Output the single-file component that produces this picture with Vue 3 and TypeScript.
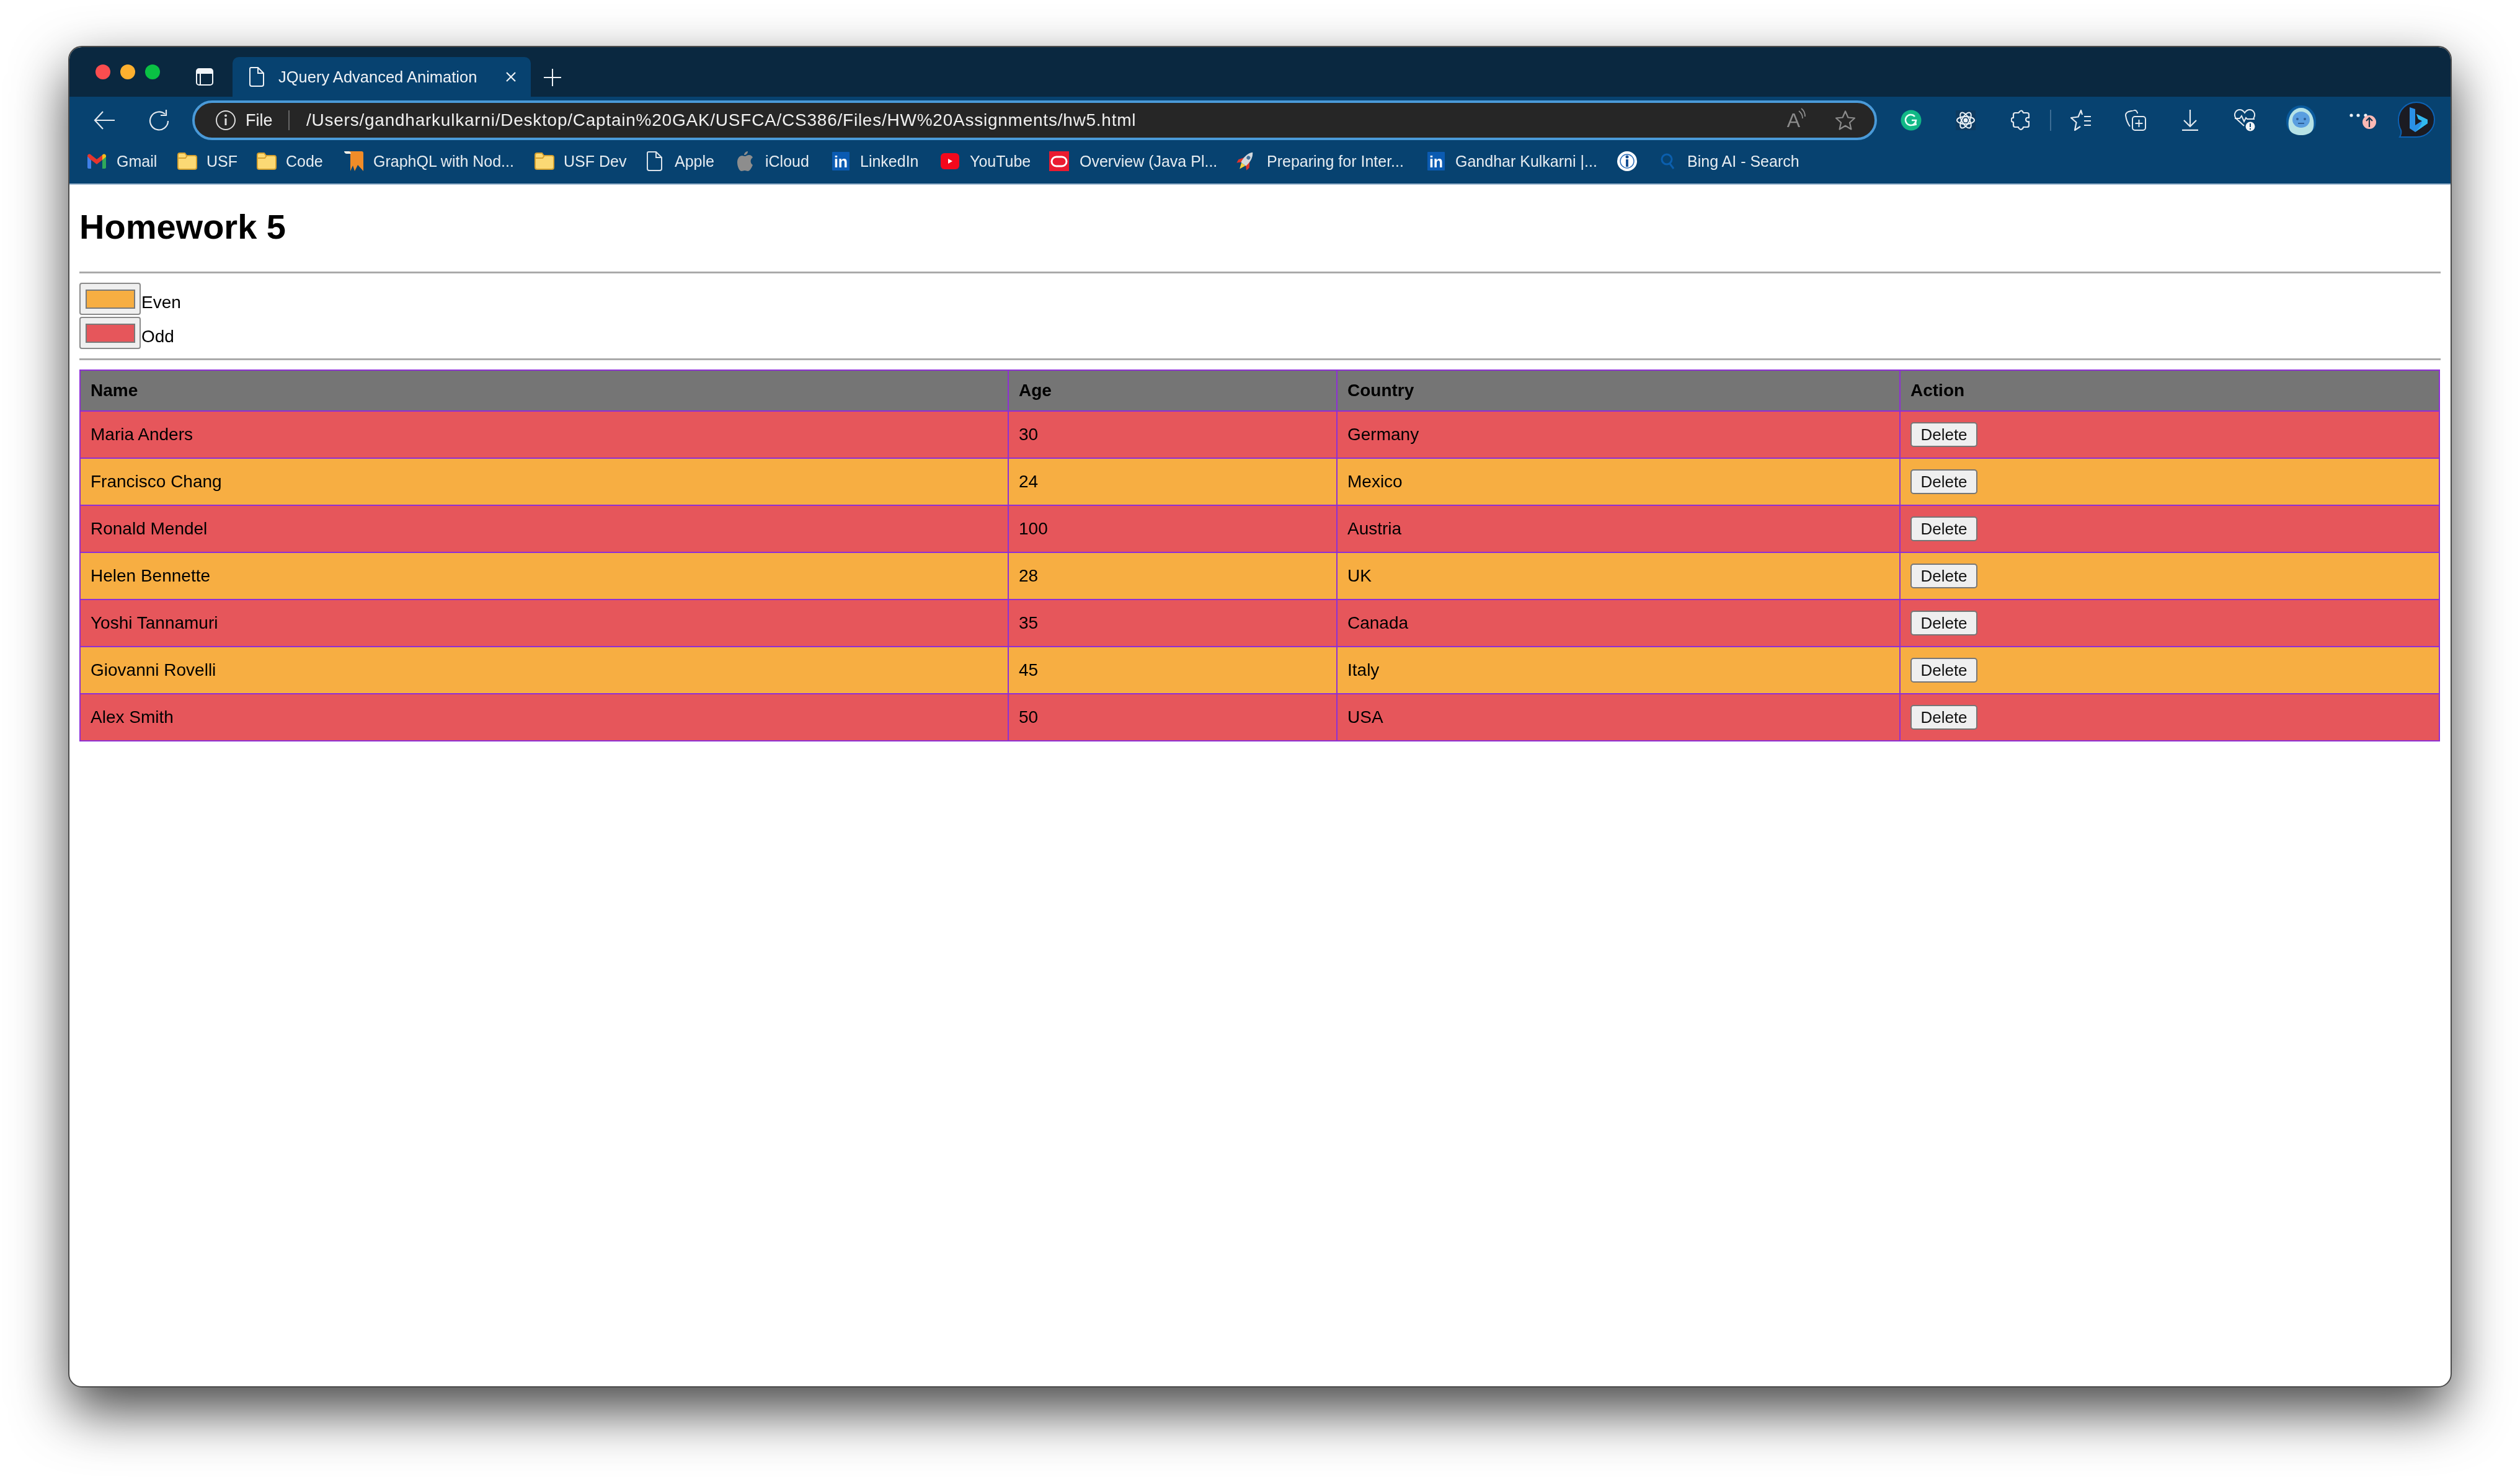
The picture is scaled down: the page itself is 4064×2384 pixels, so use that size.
<script setup lang="ts">
interface Person { name: string; age: number; country: string }
interface Mark { kind: string; label: string; width: number }

const people: Person[] = [
  { name: 'Maria Anders', age: 30, country: 'Germany' },
  { name: 'Francisco Chang', age: 24, country: 'Mexico' },
  { name: 'Ronald Mendel', age: 100, country: 'Austria' },
  { name: 'Helen Bennette', age: 28, country: 'UK' },
  { name: 'Yoshi Tannamuri', age: 35, country: 'Canada' },
  { name: 'Giovanni Rovelli', age: 45, country: 'Italy' },
  { name: 'Alex Smith', age: 50, country: 'USA' },
]

const marks: Mark[] = [
  { kind: 'gmail', label: 'Gmail', width: 145 },
  { kind: 'folder', label: 'USF', width: 128 },
  { kind: 'folder', label: 'Code', width: 141 },
  { kind: 'ribbon', label: 'GraphQL with Nod...', width: 307 },
  { kind: 'folder', label: 'USF Dev', width: 181 },
  { kind: 'doc', label: 'Apple', width: 146 },
  { kind: 'apple', label: 'iCloud', width: 153 },
  { kind: 'linkedin', label: 'LinkedIn', width: 175 },
  { kind: 'youtube', label: 'YouTube', width: 175 },
  { kind: 'oracle', label: 'Overview (Java Pl...', width: 301 },
  { kind: 'rocket', label: 'Preparing for Inter...', width: 309 },
  { kind: 'linkedin', label: 'Gandhar Kulkarni |...', width: 306 },
  { kind: 'info', label: '', width: 70 },
  { kind: 'search', label: 'Bing AI - Search', width: 240 },
]
</script>

<template>
  <div class="page">
    <div class="window">
      <div class="tabstrip">
        <div class="lights">
          <span class="light red"></span>
          <span class="light amber"></span>
          <span class="light green"></span>
        </div>
        <svg class="sidebar-icon" width="28" height="28" viewBox="0 0 28 28">
          <rect x="1" y="1" width="26" height="26" rx="4" fill="none" stroke="#f2f5f8" stroke-width="2" />
          <path d="M1 5a4 4 0 0 1 4-4h18a4 4 0 0 1 4 4v4H1z" fill="#f2f5f8" />
          <path d="M7 9v18" stroke="#f2f5f8" stroke-width="2" />
        </svg>
        <div class="tab">
          <svg width="24" height="32" viewBox="0 0 24 32" fill="none" stroke="#eef2f6" stroke-width="2">
            <path d="M3 1h11l9 9v18a3 3 0 0 1-3 3H4a3 3 0 0 1-3-3V3a2 2 0 0 1 2-2z" />
            <path d="M14 1v9h9" />
          </svg>
          <span class="tab-title">JQuery Advanced Animation</span>
          <svg class="tab-close" width="18" height="18" viewBox="0 0 18 18" stroke="#eef2f6" stroke-width="2.2">
            <path d="M2 2l14 14M16 2L2 16" />
          </svg>
        </div>
        <svg class="new-tab" width="28" height="28" viewBox="0 0 28 28" stroke="#eef2f6" stroke-width="2">
          <path d="M14 0v28M0 14h28" />
        </svg>
      </div>

      <div class="toolbar">
        <svg class="back" width="34" height="30" viewBox="0 0 34 30" fill="none" stroke="#e3e9ef" stroke-width="2.2">
          <path d="M34 15H2M15 1L2 15l13 14" />
        </svg>
        <svg class="reload" width="32" height="34" viewBox="0 0 32 34" fill="none" stroke="#e3e9ef" stroke-width="2.2">
          <path d="M26 7a14.5 14.5 0 1 0 5 11" />
          <path d="M28 0v9h-9" />
        </svg>
        <div class="address">
          <svg width="32" height="32" viewBox="0 0 32 32" fill="none" stroke="#dcdcdc" stroke-width="2">
            <circle cx="16" cy="16" r="15" />
            <path d="M16 13v11" stroke-width="3" />
            <circle cx="16" cy="8.5" r="2" fill="#dcdcdc" stroke="none" />
          </svg>
          <span class="file">File</span>
          <span class="addr-divider"></span>
          <span class="url">/Users/gandharkulkarni/Desktop/Captain%20GAK/USFCA/CS386/Files/HW%20Assignments/hw5.html</span>
          <span class="read">
            <span class="read-a">A</span>
            <svg width="12" height="20" viewBox="0 0 12 20" fill="none" stroke="#8b8b8b" stroke-width="1.8">
              <path d="M1 5c4 3 6 7 6 12M5 1c4 3 6 8 6 13" />
            </svg>
          </span>
          <svg class="star" width="32" height="32" viewBox="0 0 32 32" fill="none" stroke="#8b8b8b" stroke-width="2.2" stroke-linejoin="round">
            <path d="M16 1.5l4.4 10 10.6 1-8 7.2 2.4 10.8L16 24.8 6.6 30.5 9 19.7 1 12.5l10.6-1z" />
          </svg>
        </div>

        <div class="actions">
          <span class="slot">
            <svg width="34" height="34" viewBox="0 0 34 34">
              <circle cx="17" cy="17" r="16.5" fill="#11b886" />
              <path d="M23 11a8.5 8.5 0 1 0 2 6h-7" fill="none" stroke="#e8fff6" stroke-width="2.6" />
              <path d="M20 25l5-1-1-5" fill="none" stroke="#e8fff6" stroke-width="2" />
            </svg>
          </span>
          <span class="slot">
            <svg width="32" height="32" viewBox="0 0 32 32" fill="none" stroke="#eaf0f5" stroke-width="2">
              <rect width="32" height="32" fill="#0d3a60" stroke="none" />
              <ellipse cx="16" cy="16" rx="14" ry="6" />
              <ellipse cx="16" cy="16" rx="14" ry="6" transform="rotate(60 16 16)" />
              <ellipse cx="16" cy="16" rx="14" ry="6" transform="rotate(120 16 16)" />
              <circle cx="16" cy="16" r="2.5" fill="#eaf0f5" />
            </svg>
          </span>
          <span class="slot">
            <svg width="30" height="34" viewBox="0 0 30 34" fill="none" stroke="#e3e9ef" stroke-width="2.2" stroke-linejoin="round">
              <path d="M14 3c3-3 5-1 6 2h6c2 0 3 1 3 3v5c-4-1-5 1-5 3s2 4 5 3v6c0 2-1 3-3 3h-6c-1 4-5 5-7 2-1-1-1-2-1-2H7c-2 0-3-1-3-3v-5c-5 0-4-8 0-7V8c0-2 1-3 3-3h5c1 0 1-1 2-2z" />
            </svg>
          </span>
          <span class="tool-divider"></span>
          <span class="slot">
            <svg width="34" height="34" viewBox="0 0 34 34" fill="none" stroke="#e3e9ef" stroke-width="2.2" stroke-linejoin="round">
              <path d="M19 8l-2-7-4.5 10.5L1 13l8.5 7.5L7 33l9-6" />
              <path d="M22 11h11M22 18h11M22 25h11" />
            </svg>
          </span>
          <span class="slot">
            <svg width="34" height="34" viewBox="0 0 34 34" fill="none" stroke="#e3e9ef" stroke-width="2">
              <rect x="12" y="11" width="21" height="22" rx="4" />
              <path d="M22.5 16v12M16.5 22h12" />
              <path d="M8 27C5 23 2 16 1 9c0-3 2-5 5-6l8-2c3-1 5 1 6 4v1" />
            </svg>
          </span>
          <span class="slot">
            <svg width="26" height="34" viewBox="0 0 26 34" fill="none" stroke="#e3e9ef" stroke-width="2.2">
              <path d="M13 0v27M3 17l10 10 10-10" />
              <path d="M0 33h26" stroke-width="2.6" />
            </svg>
          </span>
          <span class="slot">
            <svg width="34" height="36" viewBox="0 0 34 36" fill="none" stroke="#e3e9ef" stroke-width="2">
              <path d="M16 27L3 15C-2 8 3 1 9 1c3 0 6 2 8 5 2-3 5-5 8-5 6 0 11 7 6 14" />
              <path d="M1 15h8l3-4 4 9 3-6 2 2h12" />
              <circle cx="26" cy="28" r="7.5" fill="#f2f5f8" stroke="none" />
              <path d="M26 23v6M26 31v2" stroke="#074270" stroke-width="2" />
            </svg>
          </span>
          <span class="slot yeti-slot">
            <svg width="48" height="48" viewBox="0 0 48 48">
              <path d="M24 0c14 0 24 12 24 25 0 8-2 13-6 16L24 46 6 41C2 38 0 33 0 25 0 12 10 0 24 0z" fill="#0a5a9c" />
              <path d="M24 4c10 0 18 8 20 20 1 8 0 14-3 18-4 4-10 6-17 6s-13-2-17-6c-3-4-4-10-3-18C6 12 14 4 24 4z" fill="#b6e2e6" />
              <ellipse cx="24" cy="23" rx="14" ry="13" fill="#5a9ee0" />
              <circle cx="18" cy="22" r="2" fill="#2d5f96" />
              <circle cx="30" cy="22" r="2" fill="#2d5f96" />
              <path d="M19 29h10" stroke="#2d5f96" stroke-width="2" />
            </svg>
          </span>
          <span class="slot more-slot">
            <svg width="46" height="28" viewBox="0 0 46 28">
              <circle cx="3" cy="6" r="2.6" fill="#eef2f6" />
              <circle cx="14" cy="6" r="2.6" fill="#eef2f6" />
              <circle cx="26" cy="6" r="2.6" fill="#eef2f6" />
              <circle cx="32" cy="17" r="11" fill="#fbb9b4" />
              <path d="M32 25V10M27 15l5-5 5 5" fill="none" stroke="#14344f" stroke-width="2.2" />
            </svg>
          </span>
          <span class="slot bing-slot">
            <svg width="62" height="62" viewBox="0 0 62 62">
              <path d="M31 2c16 0 29 12 29 28S47 58 31 58H4c2-3 3-6 2-11-3-5-4-11-4-17C2 14 15 2 31 2z" fill="#1b1b22" stroke="#0d62b4" stroke-width="2" />
              <path d="M20 10l9 3v26l11-7-6-3-3-8 18 9v6L29 50l-9-6z" fill="#2a90e6" />
              <path d="M31 21l18 9v6L29 50c6-6 11-12 11-18l-6-3z" fill="#31b9ee" />
            </svg>
          </span>
        </div>
      </div>

      <div class="bookmarks">
        <div
          v-for="(m, i) in marks"
          :key="i"
          class="mark"
          :class="m.kind"
          :style="{ width: m.width + 'px' }"
        >
          <svg v-if="m.kind === 'gmail'" width="30" height="24" viewBox="0 0 30 24">
            <path d="M0 4v18c0 1 1 2 2 2h4V9z" fill="#3f7fe8" />
            <path d="M30 4v18c0 1-1 2-2 2h-4V9z" fill="#2fa85a" />
            <path d="M24 2v8l6-5V4c0-3-3-5-6-2z" fill="#f6bd1c" />
            <path d="M0 4c0-3 3-5 6-2l9 7 9-7v8l-9 7-9-7v1z" fill="#e5352d" />
          </svg>
          <svg v-else-if="m.kind === 'folder'" width="32" height="28" viewBox="0 0 32 28">
            <path d="M1 4a3 3 0 0 1 3-3h8l3 4h13a3 3 0 0 1 3 3v16a3 3 0 0 1-3 3H4a3 3 0 0 1-3-3z" fill="#fbd974" stroke="#d6a12f" stroke-width="2" />
            <path d="M1 9h12l3-4" fill="none" stroke="#d6a12f" stroke-width="2" />
          </svg>
          <svg v-else-if="m.kind === 'ribbon'" width="32" height="32" viewBox="0 0 32 32">
            <path d="M6 0h22c2 0 3 1 3 3v29l-9-10-5 10-3-9-4 9V4C10 2 8 1 6 0z" fill="#f08c28" />
            <path d="M0 0h8c2 1 3 2 3 4H4C2 4 0 2 0 0z" fill="#f4f0e8" />
          </svg>
          <svg v-else-if="m.kind === 'doc'" width="25" height="32" viewBox="0 0 25 32" fill="none" stroke="#dbe3ea" stroke-width="2">
            <path d="M3 1h12l9 9v18a3 3 0 0 1-3 3H4a3 3 0 0 1-3-3V3a2 2 0 0 1 2-2z" />
            <path d="M15 1v9h9" />
          </svg>
          <svg v-else-if="m.kind === 'apple'" width="25" height="32" viewBox="0 0 25 32" fill="#8d8d8d">
            <path d="M17 0c.3 3-2.600 6.400-6 6 0-3 3-6 6-6zM12 8c2 0 4-2 7-2 3 0 5 2 6 4-5 3-4 10 0 12-2 5-5 10-8 10-2 0-3-1-5-1s-3 1-5 1C3 32 0 24 0 18 0 11 4 7 8 7c1 0 3 1 4 1z" />
          </svg>
          <svg v-else-if="m.kind === 'linkedin'" width="28" height="30" viewBox="0 0 28 30">
            <rect width="28" height="30" rx="1" fill="#0b5bb2" />
            <text x="14" y="25" text-anchor="middle" font-family="Liberation Sans, sans-serif" font-weight="700" font-size="25" fill="#fff">in</text>
          </svg>
          <svg v-else-if="m.kind === 'youtube'" width="30" height="26" viewBox="0 0 30 26">
            <rect width="30" height="26" rx="6" fill="#f3081c" />
            <path d="M12 9l7 4-7 4z" fill="#fff" />
          </svg>
          <svg v-else-if="m.kind === 'oracle'" width="32" height="32" viewBox="0 0 32 32">
            <rect width="32" height="32" fill="#ea1b30" />
            <rect x="4" y="9" width="24" height="15" rx="7.500" fill="none" stroke="#fff" stroke-width="3" />
          </svg>
          <svg v-else-if="m.kind === 'rocket'" width="33" height="32" viewBox="0 0 33 32">
            <g transform="rotate(38 16 16)">
              <path d="M11 12l-6 9 1 6 6-6zM21 12l6 9-1 6-6-6z" fill="#e0342b" />
              <path d="M12 22h8l-4 10z" fill="#f7cf3e" />
              <path d="M16-2c5 5 7 14 5 24H11C9 12 11 3 16-2z" fill="#d3d8dc" />
              <circle cx="16" cy="9" r="3" fill="#3f6f9a" />
            </g>
          </svg>
          <svg v-else-if="m.kind === 'info'" width="32" height="34" viewBox="0 0 32 34">
            <circle cx="16" cy="17" r="16" fill="#fff" />
            <circle cx="16" cy="17" r="11" fill="none" stroke="#2a6db8" stroke-width="1.500" />
            <circle cx="16" cy="10" r="2.500" fill="#174f92" />
            <path d="M16 14v12" stroke="#174f92" stroke-width="4" />
          </svg>
          <svg v-else-if="m.kind === 'search'" width="22" height="26" viewBox="0 0 22 26" fill="none" stroke="#0b5fae" stroke-width="3">
            <circle cx="10" cy="10" r="8" />
            <path d="M15 17l6 8" />
          </svg>
          <span v-if="m.label">{{ m.label }}</span>
        </div>
      </div>

      <main class="content">
        <h1>Homework 5</h1>
        <hr />
        <div class="legend">
          <div class="legend-row">
            <span class="picker"><span class="swatch even"></span></span>
            <span class="legend-label">Even</span>
          </div>
          <div class="legend-row">
            <span class="picker"><span class="swatch odd"></span></span>
            <span class="legend-label">Odd</span>
          </div>
        </div>
        <hr />
        <table>
          <colgroup>
            <col class="c-name" />
            <col class="c-age" />
            <col class="c-country" />
            <col />
          </colgroup>
          <thead>
            <tr>
              <th>Name</th>
              <th>Age</th>
              <th>Country</th>
              <th>Action</th>
            </tr>
          </thead>
          <tbody>
            <tr v-for="(p, i) in people" :key="p.name" :class="i % 2 === 0 ? 'odd' : 'even'">
              <td>{{ p.name }}</td>
              <td>{{ p.age }}</td>
              <td>{{ p.country }}</td>
              <td><button type="button">Delete</button></td>
            </tr>
          </tbody>
        </table>
      </main>
    </div>
  </div>
</template>

<style>
html, body { margin: 0; background: #fff; }
</style>

<style scoped>
.page {
  box-sizing: border-box;
  width: 4064px;
  height: 2384px;
  padding: 74px 110px;
  overflow: hidden;
  background: #fff;
  font-family: "Liberation Sans", Arial, sans-serif;
}
.window {
  box-sizing: border-box;
  width: 3844px;
  height: 2164px;
  display: flex;
  flex-direction: column;
  border: 2px solid #4b4b4b;
  border-radius: 22px;
  overflow: hidden;
  background: #fff;
  box-shadow: 0 38px 88px rgba(0, 0, 0, 0.72);
  filter: blur(0.7px);
}
.tabstrip {
  flex: none;
  box-sizing: border-box;
  height: 80px;
  display: flex;
  align-items: flex-end;
  padding-left: 42px;
  background: #0a2840;
}
.lights {
  display: flex;
  gap: 16px;
  align-self: flex-start;
  margin-top: 28px;
}
.light { width: 24px; height: 24px; border-radius: 50%; }
.red { background: #fb4d4f; }
.amber { background: #feb02f; }
.green { background: #0ac144; }
.sidebar-icon { align-self: flex-start; margin: 34px 0 0 58px; }
.tab {
  box-sizing: border-box;
  width: 481px;
  height: 64px;
  margin-left: 31px;
  display: flex;
  align-items: center;
  padding: 0 23px 0 27px;
  border-radius: 10px 10px 0 0;
  background: #074270;
  color: #eef2f6;
}
.tab-title { margin-left: 23px; font-size: 25.5px; white-space: nowrap; }
.tab-close { margin-left: auto; }
.new-tab { align-self: flex-start; margin: 35px 0 0 21px; }
.toolbar {
  flex: none;
  box-sizing: border-box;
  height: 72px;
  display: flex;
  align-items: center;
  padding: 4px 0 0 39px;
  background: #074270;
}
.reload { margin-left: 55px; }
.address {
  box-sizing: border-box;
  width: 2717px;
  height: 64px;
  margin-left: 38px;
  display: flex;
  align-items: center;
  padding: 0 31px 0 34px;
  border: 4px solid #4a9ad8;
  border-radius: 32px;
  background: #262626;
  color: #f0f0f0;
}
.file { margin-left: 16px; width: 45px; font-size: 27px; }
.addr-divider { width: 2px; height: 32px; margin: 0 27px 0 24px; background: #666; }
.url { font-size: 28px; letter-spacing: 0.76px; white-space: nowrap; }
.read { margin-left: auto; display: flex; align-items: flex-start; color: #8b8b8b; }
.read-a { font-size: 32px; line-height: 36px; }
.read svg { margin: -2px 0 0 -3px; }
.star { margin-left: 48px; }
.actions { display: flex; align-items: center; margin-left: 11px; }
.slot { flex: none; width: 88px; display: flex; justify-content: center; align-items: center; }
.yeti-slot { width: 94px; }
.more-slot { width: 108px; }
.bing-slot { width: 62px; }
.tool-divider { flex: none; width: 2px; height: 34px; margin: 0 4px; background: #3c6c94; }
.bookmarks {
  flex: none;
  box-sizing: border-box;
  height: 70px;
  display: flex;
  align-items: center;
  padding: 0 0 4px 29px;
  background: #074270;
  border-bottom: 2px solid #9db7cf;
  color: #e6ecf1;
  font-size: 25px;
  white-space: nowrap;
}
.mark { flex: none; display: flex; align-items: center; gap: 17px; }
.mark.apple { gap: 20px; }
.mark.doc { gap: 20px; }
.mark.ribbon { gap: 15px; }
.mark.folder { gap: 15px; }
.mark.search { gap: 21px; }
.content { flex: 1; padding: 0 16px; color: #000; font-size: 28px; }
h1 {
  margin: 36px 0 40px;
  font-size: 56px;
  line-height: 64px;
  font-weight: 700;
}
hr {
  height: 3px;
  margin: 0;
  border: 0;
  background: #aaa;
}
.legend { display: flex; flex-direction: column; gap: 3px; margin: 15px 0; }
.legend-row { display: flex; align-items: flex-end; }
.picker {
  box-sizing: border-box;
  width: 99px;
  height: 52px;
  display: flex;
  align-items: center;
  justify-content: center;
  border: 2px solid #8a8a8a;
  border-radius: 4px;
  background: #efefef;
}
.swatch {
  box-sizing: border-box;
  width: 80px;
  height: 31px;
  border: 2px solid #7a7a7a;
}
.swatch.even { background: #f7ae42; }
.swatch.odd { background: #e6565b; }
.legend-label { margin-left: 1px; padding-bottom: 4px; line-height: 32px; }
table {
  width: 3807px;
  margin-top: 15px;
  table-layout: fixed;
  border-collapse: collapse;
  border: 2px solid #8e2fd6;
}
.c-name { width: 1497px; }
.c-age { width: 530px; }
.c-country { width: 908px; }
th, td {
  box-sizing: border-box;
  padding: 0 16px;
  border: 2px solid #8e2fd6;
  text-align: left;
}
th { height: 66px; background: #757575; font-weight: 700; }
td { height: 76px; }
tr.odd td { background: #e6565b; }
tr.even td { background: #f7ae42; }
button {
  display: block;
  box-sizing: border-box;
  width: 108px;
  height: 40px;
  padding: 0;
  border: 2px solid #767676;
  border-radius: 5px;
  background: #efefef;
  color: #111;
  font-family: inherit;
  font-size: 26px;
}
</style>
